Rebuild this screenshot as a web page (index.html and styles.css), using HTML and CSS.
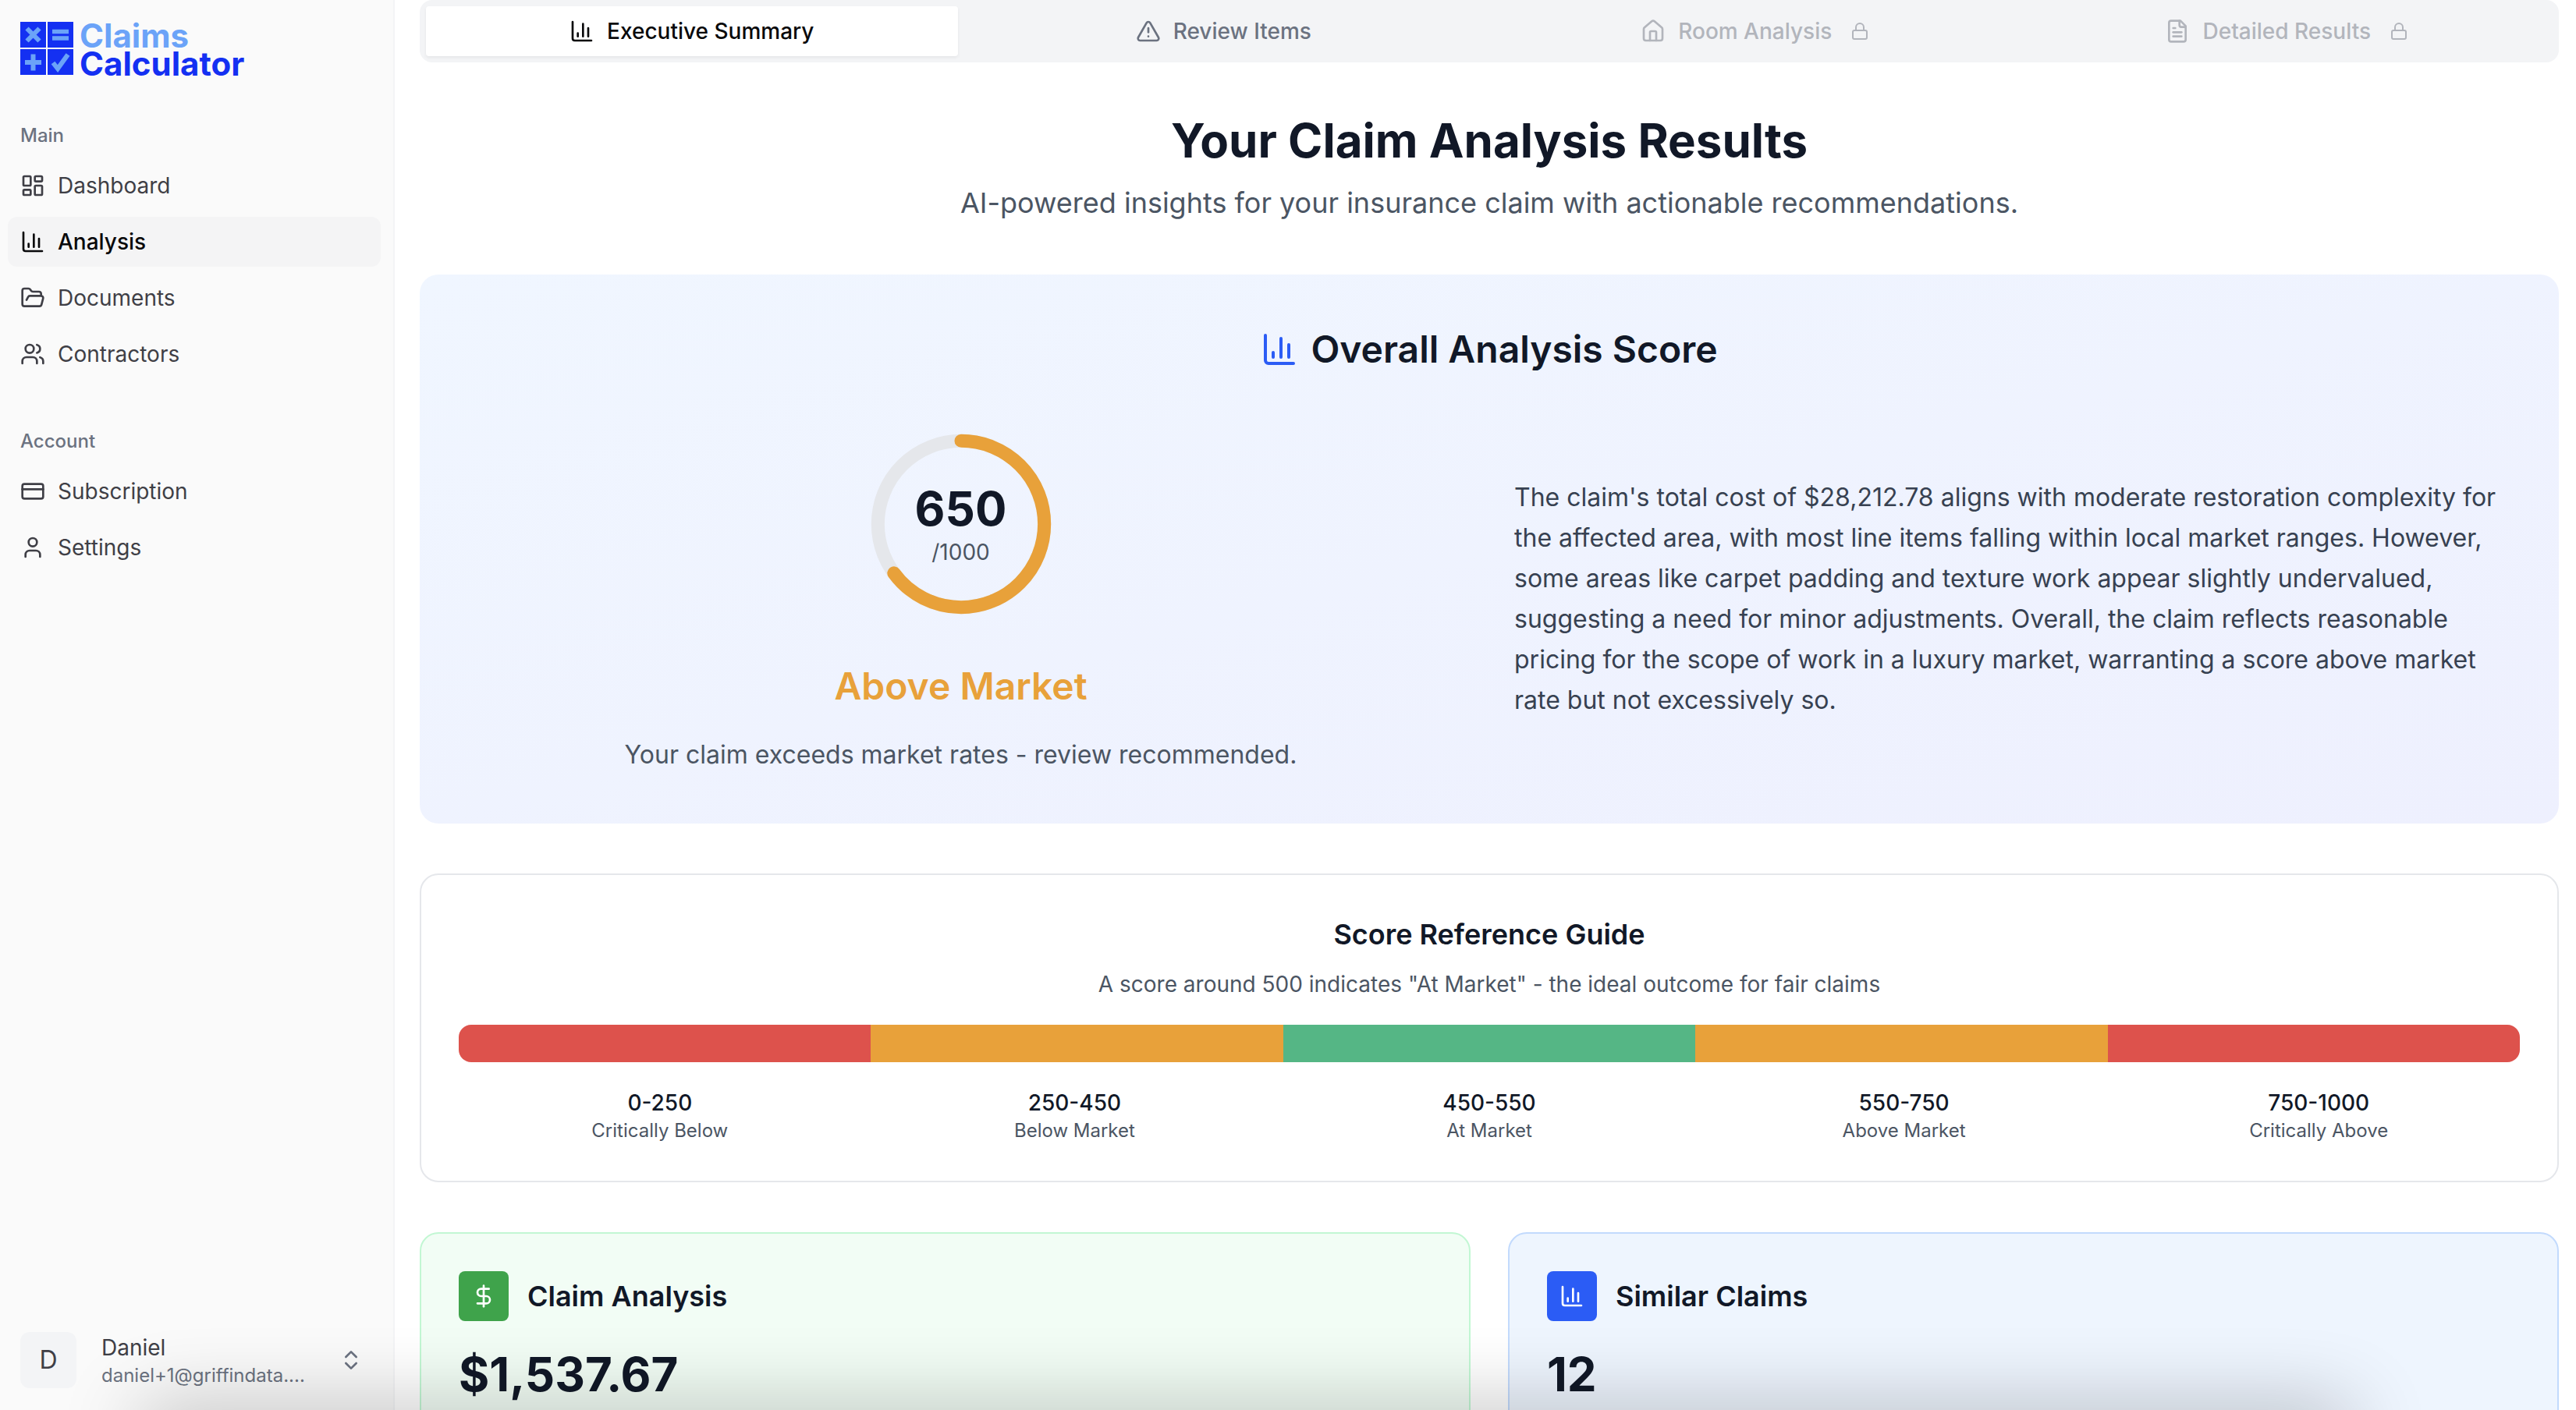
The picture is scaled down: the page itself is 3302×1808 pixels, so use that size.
FILE: index.html
```html
<!DOCTYPE html>
<html lang="en">
<head>
  <meta charset="UTF-8" />
  <meta name="viewport" content="width=device-width, initial-scale=1" />
  <title>Claims Calculator - Analysis</title>
  <link rel="stylesheet" href="styles.css">
</head>
<body>
  <!-- icon sprite -->
  <svg class="sprite" aria-hidden="true">
    <symbol id="i-chart" viewBox="0 0 24 24"><path d="M3 3v16a2 2 0 0 0 2 2h16"/><path d="M18 17V9"/><path d="M13 17V5"/><path d="M8 17v-3"/></symbol>
    <symbol id="i-grid" viewBox="0 0 24 24"><rect width="7" height="9" x="3" y="3" rx="1"/><rect width="7" height="5" x="14" y="3" rx="1"/><rect width="7" height="9" x="14" y="12" rx="1"/><rect width="7" height="5" x="3" y="16" rx="1"/></symbol>
    <symbol id="i-folder" viewBox="0 0 24 24"><path d="m6 14 1.5-2.9A2 2 0 0 1 9.24 10H20a2 2 0 0 1 1.94 2.5l-1.54 6a2 2 0 0 1-1.95 1.5H4a2 2 0 0 1-2-2V5a2 2 0 0 1 2-2h3.9a2 2 0 0 1 1.69.9l.81 1.2a2 2 0 0 0 1.67.9H18a2 2 0 0 1 2 2v2"/></symbol>
    <symbol id="i-users" viewBox="0 0 24 24"><path d="M16 21v-2a4 4 0 0 0-4-4H6a4 4 0 0 0-4 4v2"/><circle cx="9" cy="7" r="4"/><path d="M22 21v-2a4 4 0 0 0-3-3.87"/><path d="M16 3.13a4 4 0 0 1 0 7.75"/></symbol>
    <symbol id="i-card" viewBox="0 0 24 24"><rect width="20" height="14" x="2" y="5" rx="2"/><path d="M2 10h20"/></symbol>
    <symbol id="i-user" viewBox="0 0 24 24"><path d="M19 21v-2a4 4 0 0 0-4-4H9a4 4 0 0 0-4 4v2"/><circle cx="12" cy="7" r="4"/></symbol>
    <symbol id="i-updown" viewBox="0 0 24 24"><path d="m7 15 5 5 5-5"/><path d="m7 9 5-5 5 5"/></symbol>
    <symbol id="i-alert" viewBox="0 0 24 24"><path d="m21.73 18-8-14a2 2 0 0 0-3.48 0l-8 14A2 2 0 0 0 4 21h16a2 2 0 0 0 1.73-3"/><path d="M12 9v4"/><path d="M12 17h.01"/></symbol>
    <symbol id="i-house" viewBox="0 0 24 24"><path d="M15 21v-8a1 1 0 0 0-1-1h-4a1 1 0 0 0-1 1v8"/><path d="M3 10a2 2 0 0 1 .709-1.528l7-5.999a2 2 0 0 1 2.582 0l7 5.999A2 2 0 0 1 21 10v9a2 2 0 0 1-2 2H5a2 2 0 0 1-2-2z"/></symbol>
    <symbol id="i-file" viewBox="0 0 24 24"><path d="M15 2H6a2 2 0 0 0-2 2v16a2 2 0 0 0 2 2h12a2 2 0 0 0 2-2V7Z"/><path d="M14 2v4a2 2 0 0 0 2 2h4"/><path d="M10 9H8"/><path d="M16 13H8"/><path d="M16 17H8"/></symbol>
    <symbol id="i-lock" viewBox="0 0 24 24"><rect width="18" height="11" x="3" y="11" rx="2"/><path d="M7 11V7a5 5 0 0 1 10 0v4"/></symbol>
    <symbol id="i-dollar" viewBox="0 0 24 24"><path d="M12 2v20"/><path d="M17 5H9.5a3.5 3.5 0 0 0 0 7h5a3.5 3.5 0 0 1 0 7H6"/></symbol>
  </svg>

  <div class="app">
    <aside class="sidebar">
      <a class="logo" href="#">
        <svg class="logo-mark" viewBox="0 0 68 68" aria-hidden="true">
          <g fill="#1430f2">
            <rect width="33" height="33"/><rect x="35" width="33" height="33"/>
            <rect y="35" width="33" height="33"/><rect x="35" y="35" width="33" height="33"/>
          </g>
          <g fill="none" stroke="#6ba3f8" stroke-width="6">
            <path d="M8.500 8.500l16 16M24.500 8.500l-16 16"/>
            <path d="M41 12.500h21M41 21h21" stroke-width="5.500"/>
            <path d="M6 52h21M16.500 41.500v21"/>
            <path d="M42 52.500l6 7.500 13-18"/>
          </g>
        </svg>
        <span class="logo-text"><span class="logo-top">Claims</span><span class="logo-bottom">Calculator</span></span>
      </a>

      <nav class="nav">
        <h2 class="nav-label">Main</h2>
        <a class="nav-item" href="#"><svg class="icon"><use href="#i-grid"/></svg>Dashboard</a>
        <a class="nav-item active" href="#"><svg class="icon"><use href="#i-chart"/></svg>Analysis</a>
        <a class="nav-item" href="#"><svg class="icon"><use href="#i-folder"/></svg>Documents</a>
        <a class="nav-item" href="#"><svg class="icon"><use href="#i-users"/></svg>Contractors</a>
      </nav>
      <nav class="nav">
        <h2 class="nav-label">Account</h2>
        <a class="nav-item" href="#"><svg class="icon"><use href="#i-card"/></svg>Subscription</a>
        <a class="nav-item" href="#"><svg class="icon"><use href="#i-user"/></svg>Settings</a>
      </nav>

      <button class="user" type="button">
        <span class="avatar">D</span>
        <span class="user-info">
          <span class="user-name">Daniel</span>
          <span class="user-email">daniel+1@griffindata....</span>
        </span>
        <svg class="icon"><use href="#i-updown"/></svg>
      </button>
    </aside>

    <main class="main">
      <div class="tabs" role="tablist">
        <button class="tab active" type="button" role="tab" aria-selected="true"><svg class="icon"><use href="#i-chart"/></svg>Executive Summary</button>
        <button class="tab" type="button" role="tab"><svg class="icon"><use href="#i-alert"/></svg>Review Items</button>
        <button class="tab" type="button" role="tab" disabled><svg class="icon"><use href="#i-house"/></svg>Room Analysis<svg class="icon lock"><use href="#i-lock"/></svg></button>
        <button class="tab" type="button" role="tab" disabled><svg class="icon"><use href="#i-file"/></svg>Detailed Results<svg class="icon lock"><use href="#i-lock"/></svg></button>
      </div>

      <header class="page-header">
        <h1>Your Claim Analysis Results</h1>
        <p>AI-powered insights for your insurance claim with actionable recommendations.</p>
      </header>

      <section class="score-card">
        <h2 class="score-title"><svg class="icon"><use href="#i-chart"/></svg>Overall Analysis Score</h2>
        <div class="score-grid">
          <div class="score-left">
            <div class="ring">
              <svg viewBox="0 0 120 120" aria-hidden="true">
                <circle class="ring-track" cx="60" cy="60" r="50"/>
                <circle class="ring-value" cx="60" cy="60" r="50" pathLength="1000" stroke-dasharray="650 1000" transform="rotate(-90 60 60)"/>
              </svg>
              <div class="ring-text">
                <span class="ring-score">650</span>
                <span class="ring-max">/1000</span>
              </div>
            </div>
            <h3 class="verdict">Above Market</h3>
            <p class="verdict-note">Your claim exceeds market rates - review recommended.</p>
          </div>
          <p class="score-summary">The claim's total cost of $28,212.78 aligns with moderate restoration complexity for the affected area, with most line items falling within local market ranges. However, some areas like carpet padding and texture work appear slightly undervalued, suggesting a need for minor adjustments. Overall, the claim reflects reasonable pricing for the scope of work in a luxury market, warranting a score above market rate but not excessively so.</p>
        </div>
      </section>

      <section class="guide">
        <h2>Score Reference Guide</h2>
        <p class="guide-sub">A score around 500 indicates "At Market" - the ideal outcome for fair claims</p>
        <div class="scale">
          <span class="red"></span><span class="orange"></span><span class="green"></span><span class="orange"></span><span class="red"></span>
        </div>
        <ul class="ranges">
          <li><strong>0-250</strong><span>Critically Below</span></li>
          <li><strong>250-450</strong><span>Below Market</span></li>
          <li><strong>450-550</strong><span>At Market</span></li>
          <li><strong>550-750</strong><span>Above Market</span></li>
          <li><strong>750-1000</strong><span>Critically Above</span></li>
        </ul>
      </section>

      <div class="stats">
        <section class="stat stat-green">
          <h2><span class="stat-icon"><svg class="icon"><use href="#i-dollar"/></svg></span>Claim Analysis</h2>
          <p class="stat-value">$1,537.67</p>
        </section>
        <section class="stat stat-blue">
          <h2><span class="stat-icon"><svg class="icon"><use href="#i-chart"/></svg></span>Similar Claims</h2>
          <p class="stat-value">12</p>
        </section>
      </div>
    </main>
  </div>

  <div class="bottom-shade"></div>
</body>
</html>
```
FILE: styles.css
```css
* { box-sizing: border-box; margin: 0; padding: 0; }
body { font-family: Inter, "Liberation Sans", sans-serif; font-size: 28px; line-height: 40px; color: #111827; background: #fff; overflow: hidden; }
button { font: inherit; border: 0; background: none; }
a { color: inherit; text-decoration: none; }

.sprite { display: none; }
.icon { width: 32px; height: 32px; flex: none; fill: none; stroke: currentColor; stroke-width: 2; stroke-linecap: round; stroke-linejoin: round; }

.app { display: flex; height: 100vh; overflow: hidden; }

/* Sidebar */
.sidebar { display: flex; flex-direction: column; flex: none; width: 506px; padding: 28px 16px 28px 10px; background: #fafafa; border-right: 2px solid #f3f4f6; color: #3f3f46; }
.logo { display: flex; gap: 8px; padding-left: 16px; margin-bottom: 42px; }
.logo-mark { width: 68px; height: 68px; }
.logo-text { display: flex; flex-direction: column; font-weight: 700; font-size: 42px; line-height: 36px; }
.logo-top { color: #6ba3f8; }
.logo-bottom { color: #1430f2; }
.nav { display: flex; flex-direction: column; gap: 8px; margin-bottom: 48px; }
.nav-label { height: 64px; margin-bottom: -8px; padding-left: 16px; font-size: 24px; font-weight: 500; line-height: 64px; color: #6b7280; }
.nav-item { display: flex; align-items: center; gap: 16px; height: 64px; padding: 0 16px; border-radius: 12px; }
.nav-item.active { background: #f4f4f5; color: #09090b; font-weight: 500; }
.user { display: flex; align-items: center; margin-top: auto; padding: 0 22px 0 16px; text-align: left; color: #3f3f46; }
.avatar { width: 72px; height: 72px; margin-right: 32px; border-radius: 12px; background: #f3f4f6; font-size: 32px; line-height: 72px; text-align: center; }
.user-info { display: flex; flex: 1; flex-direction: column; }
.user-email { font-size: 24px; line-height: 32px; color: #6b7280; }
.user .icon { color: #6b7280; }

/* Main column */
.main { flex: 1; min-width: 0; padding: 0 22px 0 32px; overflow: hidden; }

.tabs { display: grid; grid-template-columns: repeat(4, 1fr); padding: 8px; border-radius: 16px; background: #f3f4f6; }
.tab { display: flex; align-items: center; justify-content: center; gap: 16px; height: 64px; border-radius: 4px; font-weight: 500; color: #6b7280; }
.tab.active { background: #fff; color: #09090b; box-shadow: 0 2px 4px rgba(0, 0, 0, 0.06); }
.tab:disabled { color: #b2b5bc; }
.tab .lock { width: 24px; height: 24px; margin-left: 8px; }

.page-header { padding: 64px 0; text-align: center; }
.page-header h1 { margin-bottom: 16px; font-size: 60px; font-weight: 700; line-height: 72px; }
.page-header p { font-size: 36px; line-height: 56px; color: #4b5563; }

/* Overall score */
.score-card { padding: 64px 48px; border-radius: 24px; background: linear-gradient(to bottom right, #f0f6ff, #eef0fe); }
.score-title { display: flex; align-items: center; justify-content: center; gap: 16px; margin-bottom: 64px; font-size: 48px; font-weight: 600; line-height: 64px; }
.score-title .icon { width: 48px; height: 48px; color: #2b5cf5; }
.score-grid { display: grid; grid-template-columns: 1fr 1fr; gap: 64px; align-items: center; }
.score-left { text-align: center; }
.ring { display: grid; width: 256px; height: 256px; margin: 0 auto 48px; place-items: center; }
.ring > * { grid-area: 1 / 1; }
.ring circle { fill: none; stroke-width: 8; }
.ring-track { stroke: #e5e7eb; }
.ring-value { stroke: #e8a13a; stroke-linecap: round; }
.ring-text { display: flex; flex-direction: column; }
.ring-score { font-size: 60px; font-weight: 700; line-height: 72px; }
.ring-max { color: #4b5563; }
.verdict { margin-bottom: 32px; font-size: 48px; font-weight: 600; line-height: 64px; color: #e8a13a; }
.verdict-note { font-size: 32px; line-height: 48px; color: #4b5563; }
.score-summary { font-size: 32px; line-height: 52px; color: #374151; }

/* Reference guide */
.guide { margin: 64px 0; padding: 48px; border: 2px solid #e5e7eb; border-radius: 24px; text-align: center; }
.guide h2 { margin-bottom: 16px; font-size: 36px; font-weight: 600; line-height: 56px; }
.guide-sub { color: #4b5563; }
.scale { display: flex; height: 48px; margin: 32px 0; border-radius: 16px; overflow: hidden; }
.scale span { flex: 1; }
.red { background: #dd524c; }
.orange { background: #e8a13a; }
.green { background: #55b685; }
.ranges { display: grid; grid-template-columns: repeat(5, 1fr); gap: 16px; list-style: none; }
.ranges strong { display: block; font-weight: 500; }
.ranges span { display: block; font-size: 24px; line-height: 32px; color: #4b5563; }

/* Stat cards */
.stats { display: grid; grid-template-columns: 1fr 1fr; gap: 48px; }
.stat { padding: 48px; border: 2px solid; border-radius: 24px; }
.stat-green { background: #f2fdf5; border-color: #c2f7d3; }
.stat-blue { background: #eef5fe; border-color: #c2dafd; }
.stat h2 { display: flex; align-items: center; gap: 24px; margin-bottom: 32px; font-size: 36px; font-weight: 600; line-height: 56px; }
.stat-icon { display: flex; align-items: center; justify-content: center; width: 64px; height: 64px; border-radius: 8px; color: #fff; }
.stat-green .stat-icon { background: #3fa34b; }
.stat-blue .stat-icon { background: #2b5cf5; }
.stat-value { font-size: 60px; font-weight: 700; line-height: 72px; }

/* soft shade rising from the bottom edge of the window */
.bottom-shade { position: fixed; left: 180px; right: 290px; bottom: -60px; height: 60px; box-shadow: 0 0 100px rgba(0, 0, 0, 0.3); pointer-events: none; }
```
